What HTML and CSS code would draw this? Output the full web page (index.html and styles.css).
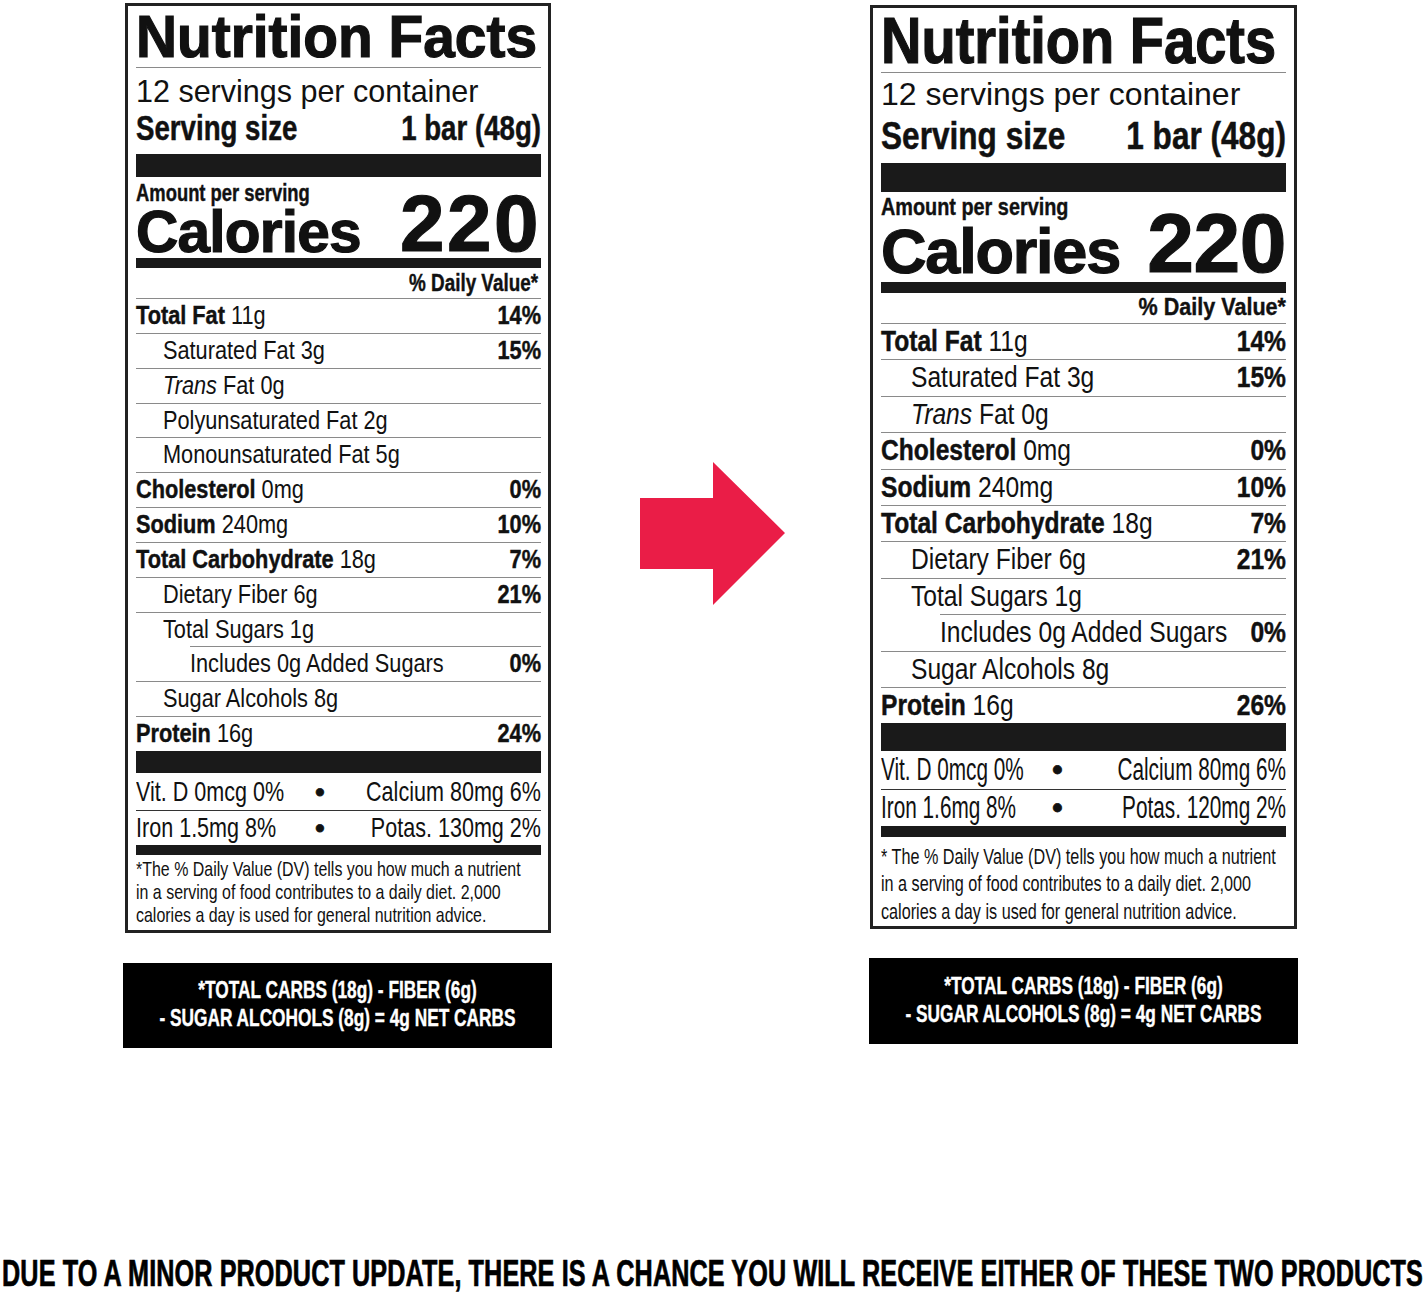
FILE: index.html
```html
<!DOCTYPE html>
<html lang="en">
<head>
<meta charset="utf-8">
<title>Nutrition Facts update</title>
<link rel="stylesheet" href="styles.css">
</head>
<body>
<div class="page">
  <div class="top">
    <div class="col col-a">
      <div class="nf nf-a">
        <div class="title"><div class="cx">Nutrition Facts</div></div>
        <div class="servings">12 servings per container</div>
        <div class="size"><div class="cx"><span>Serving size</span><span>1 bar (48g)</span></div></div>
        <div class="bar-xl"></div>
        <div class="cal">
          <div class="cal-left">
            <div class="amount"><div class="cx">Amount per serving</div></div>
            <div class="cal-word">Calories</div>
          </div>
          <div class="cal-num">220</div>
        </div>
        <div class="bar-m"></div>
        <div class="dv"><div class="cx">% Daily Value*</div></div>
        <div class="row"><div class="cx"><span><b>Total Fat</b> 11g</span><b>14%</b></div></div>
        <div class="row sub"><div class="cx"><span>Saturated Fat 3g</span><b>15%</b></div></div>
        <div class="row sub"><div class="cx"><span><i>Trans</i> Fat 0g</span></div></div>
        <div class="row sub"><div class="cx"><span>Polyunsaturated Fat 2g</span></div></div>
        <div class="row sub"><div class="cx"><span>Monounsaturated Fat 5g</span></div></div>
        <div class="row"><div class="cx"><span><b>Cholesterol</b> 0mg</span><b>0%</b></div></div>
        <div class="row"><div class="cx"><span><b>Sodium</b> 240mg</span><b>10%</b></div></div>
        <div class="row"><div class="cx"><span><b>Total Carbohydrate</b> 18g</span><b>7%</b></div></div>
        <div class="row sub"><div class="cx"><span>Dietary Fiber 6g</span><b>21%</b></div></div>
        <div class="row sub"><div class="cx"><span>Total Sugars 1g</span></div></div>
        <div class="row sub2"><div class="cx"><span>Includes 0g Added Sugars</span><b>0%</b></div></div>
        <div class="row sub"><div class="cx"><span>Sugar Alcohols 8g</span></div></div>
        <div class="row"><div class="cx"><span><b>Protein</b> 16g</span><b>24%</b></div></div>
        <div class="bar-xl2"></div>
        <div class="vit"><div class="cx"><span>Vit. D 0mcg 0%</span><span class="dot"><span>•</span></span><span class="vr">Calcium 80mg 6%</span></div></div>
        <div class="vit vit2"><div class="cx"><span>Iron 1.5mg 8%</span><span class="dot"><span>•</span></span><span class="vr">Potas. 130mg 2%</span></div></div>
        <div class="bar-m2"></div>
        <div class="foot"><div class="cx">*The % Daily Value (DV) tells you how much a nutrient<br>in a serving of food contributes to a daily diet. 2,000<br>calories a day is used for general nutrition advice.</div></div>
      </div>
      <div class="net net-a"><div class="cx">*TOTAL CARBS (18g) - FIBER (6g)<br>- SUGAR ALCOHOLS (8g) = 4g NET CARBS</div></div>
    </div>

    <div class="arrow">
      <svg width="145" height="143" viewBox="0 0 145 143" aria-hidden="true">
        <polygon points="0,36 73,36 73,0 145,71 73,143 73,107 0,107" fill="#ea1d47"/>
      </svg>
    </div>

    <div class="col col-b">
      <div class="nf nf-b">
        <div class="title"><div class="cx">Nutrition Facts</div></div>
        <div class="servings">12 servings per container</div>
        <div class="size"><div class="cx"><span>Serving size</span><span>1 bar (48g)</span></div></div>
        <div class="bar-xl"></div>
        <div class="cal">
          <div class="cal-left">
            <div class="amount"><div class="cx">Amount per serving</div></div>
            <div class="cal-word">Calories</div>
          </div>
          <div class="cal-num">220</div>
        </div>
        <div class="bar-m"></div>
        <div class="dv"><div class="cx">% Daily Value*</div></div>
        <div class="row"><div class="cx"><span><b>Total Fat</b> 11g</span><b>14%</b></div></div>
        <div class="row sub"><div class="cx"><span>Saturated Fat 3g</span><b>15%</b></div></div>
        <div class="row sub"><div class="cx"><span><i>Trans</i> Fat 0g</span></div></div>
        <div class="row"><div class="cx"><span><b>Cholesterol</b> 0mg</span><b>0%</b></div></div>
        <div class="row"><div class="cx"><span><b>Sodium</b> 240mg</span><b>10%</b></div></div>
        <div class="row"><div class="cx"><span><b>Total Carbohydrate</b> 18g</span><b>7%</b></div></div>
        <div class="row sub"><div class="cx"><span>Dietary Fiber 6g</span><b>21%</b></div></div>
        <div class="row sub"><div class="cx"><span>Total Sugars 1g</span></div></div>
        <div class="row sub2"><div class="cx"><span>Includes 0g Added Sugars</span><b>0%</b></div></div>
        <div class="row sub"><div class="cx"><span>Sugar Alcohols 8g</span></div></div>
        <div class="row"><div class="cx"><span><b>Protein</b> 16g</span><b>26%</b></div></div>
        <div class="bar-xl2"></div>
        <div class="vit"><div class="cx"><span>Vit. D 0mcg 0%</span><span class="dot"><span>•</span></span><span class="vr">Calcium 80mg 6%</span></div></div>
        <div class="vit vit2"><div class="cx"><span>Iron 1.6mg 8%</span><span class="dot"><span>•</span></span><span class="vr">Potas. 120mg 2%</span></div></div>
        <div class="bar-m2"></div>
        <div class="foot"><div class="cx">* The % Daily Value (DV) tells you how much a nutrient<br>in a serving of food contributes to a daily diet. 2,000<br>calories a day is used for general nutrition advice.</div></div>
      </div>
      <div class="net net-b"><div class="cx">*TOTAL CARBS (18g) - FIBER (6g)<br>- SUGAR ALCOHOLS (8g) = 4g NET CARBS</div></div>
    </div>
  </div>

  <div class="notice"><div class="cy">DUE TO A MINOR PRODUCT UPDATE, THERE IS A CHANCE YOU WILL RECEIVE EITHER OF THESE TWO PRODUCTS</div></div>
</div>
</body>
</html>
```

FILE: styles.css
```css
html, body {
  margin: 0;
  padding: 0;
  background: #fff;
}

.page {
  width: 1425px;
  height: 1292px;
  overflow: hidden;
  color: #111;
  font-family: "Liberation Sans", Arial, sans-serif;
}

.top {
  display: flex;
  align-items: flex-start;
  padding-left: 123px;
  height: 1050px;
}

.col {
  width: 429px;
  display: flex;
  flex-direction: column;
}

.col-b {
  margin-left: 84px;
}

.arrow {
  margin-top: 462px;
  margin-left: 88px;
  width: 145px;
  height: 143px;
}

.arrow svg {
  display: block;
}

/* condensed text: the type is drawn narrower, like a condensed face */
.cx {
  width: calc(100% / var(--k, 0.82));
  transform: scaleX(var(--k, 0.82));
  transform-origin: 0 0;
}

/* tall text: smaller type stretched upward, same condensed look */
.cy {
  transform: scaleY(var(--s, 1.46));
  transform-origin: 0 0;
}

/* ---------- label ---------- */
.nf {
  border: 3px solid #222;
  box-sizing: border-box;
  background: #fff;
  color: #111;
  white-space: nowrap;
}

.nf b {
  font-weight: 700;
  -webkit-text-stroke: 0.45px #111;
}

.nf i {
  font-style: italic;
}

.title {
  font-weight: 700;
  -webkit-text-stroke: 1.2px #111;
  border-bottom: 1.5px solid #8a8a8a;
}

.servings {
  font-weight: 400;
}

.size .cx {
  display: flex;
  justify-content: space-between;
  font-weight: 700;
  -webkit-text-stroke: 0.5px #111;
}

.bar-xl,
.bar-xl2,
.bar-m,
.bar-m2 {
  background: #1a1a1a;
}

.cal {
  display: flex;
  justify-content: space-between;
  align-items: flex-end;
}

.amount {
  font-weight: 700;
  -webkit-text-stroke: 0.4px #111;
}

.cal-word,
.cal-num {
  font-weight: 700;
  -webkit-text-stroke: 1.2px #111;
}

.dv {
  text-align: right;
  font-weight: 700;
  -webkit-text-stroke: 0.4px #111;
}

.row {
  box-sizing: border-box;
  border-top: 1.5px solid #8a8a8a;
}

.row .cx {
  display: flex;
  justify-content: space-between;
}

.vit .cx {
  display: grid;
}

.vit2 {
  border-top: 1px solid #333;
}

.dot {
  text-align: center;
}

.dot span {
  display: inline-block;
  transform: scaleX(calc(1 / var(--k)));
  -webkit-text-stroke: 0.8px #111;
}

.vr {
  text-align: right;
}

.foot {
  font-weight: 400;
}

.net {
  background: #000;
  color: #fff;
  font-weight: 700;
  -webkit-text-stroke: 0.4px #fff;
  text-align: center;
  box-sizing: border-box;
  white-space: nowrap;
  --k: 0.72;
}

/* ---------- version A (left) ---------- */
.nf-a {
  width: 426px;
  margin: 3px 0 0 2px;
  padding: 1px 7px 4.3px 8px;
}

.nf-a .title {
  --k: 0.97;
  font-size: 58.6px;
  line-height: 60px;
}

.nf-a .servings {
  font-size: 30.5px;
  line-height: 47px;
}

.nf-a .size {
  --k: 0.79;
  font-size: 35px;
  line-height: 26px;
}

.nf-a .bar-xl {
  margin-top: 13px;
  height: 23px;
}

.nf-a .amount {
  --k: 0.8;
  font-size: 23px;
  line-height: 32px;
}

.nf-a .cal-word {
  font-size: 58.6px;
  line-height: 45.4px;
  letter-spacing: -0.8px;
}

.nf-a .cal-num {
  font-size: 80px;
  line-height: 60.2px;
  letter-spacing: 2.5px;
}

.nf-a .bar-m {
  margin-top: 3.6px;
  height: 10px;
}

.nf-a .dv {
  --k: 0.82;
  font-size: 23px;
  line-height: 30px;
  padding-right: 3px;
}

.nf-a .row {
  --k: 0.82;
  height: 34.85px;
  line-height: 33.35px;
  font-size: 26.5px;
}

.nf-a .sub {
  padding-left: 27px;
}

.nf-a .sub2 {
  margin-left: 54px;
}

.nf-a .bar-xl2 {
  height: 22px;
}

.nf-a .vit {
  --k: 0.77;
  font-size: 28px;
  line-height: 37px;
}

.nf-a .vit .cx {
  grid-template-columns: 231px 16px 1fr;
}

.nf-a .vit2 {
  line-height: 34px;
}

.nf-a .bar-m2 {
  height: 10px;
}

.nf-a .foot {
  --k: 0.76;
  font-size: 21px;
  line-height: 23px;
  padding-top: 2.2px;
}

.net-a {
  margin-top: 30px;
  height: 85px;
  padding-top: 12.7px;
  font-size: 24px;
  line-height: 28px;
}

/* ---------- version B (right) ---------- */
.nf-b {
  width: 427px;
  margin: 5px 0 0 1px;
  padding: 2.5px 8px 1px 8px;
}

.nf-b .title {
  --k: 0.875;
  font-size: 64px;
  line-height: 61px;
}

.nf-b .servings {
  font-size: 32px;
  line-height: 42.8px;
}

.nf-b .size {
  --k: 0.81;
  font-size: 39px;
  line-height: 42.4px;
}

.nf-b .bar-xl {
  margin-top: 5.3px;
  height: 29px;
}

.nf-b .amount {
  --k: 0.81;
  font-size: 24.5px;
  line-height: 29px;
}

.nf-b .cal-word {
  font-size: 63px;
  line-height: 60.4px;
  letter-spacing: -1.2px;
}

.nf-b .cal-num {
  font-size: 84px;
  line-height: 75px;
  letter-spacing: -0.5px;
}

.nf-b .bar-m {
  margin-top: 0.6px;
  height: 11px;
}

.nf-b .dv {
  --k: 0.88;
  font-size: 24.5px;
  line-height: 27px;
  margin-bottom: 3px;
}

.nf-b .row {
  --k: 0.82;
  height: 36.4px;
  line-height: 34.9px;
  font-size: 30px;
}

.nf-b .sub {
  padding-left: 30px;
}

.nf-b .sub2 {
  margin-left: 59px;
}

.nf-b .bar-xl2 {
  height: 28px;
}

.nf-b .vit {
  --k: 0.67;
  font-size: 31px;
  line-height: 38px;
}

.nf-b .vit .cx {
  grid-template-columns: 255px 16px 1fr;
}

.nf-b .vit2 {
  line-height: 36px;
}

.nf-b .bar-m2 {
  height: 11px;
}

.nf-b .foot {
  --k: 0.72;
  font-size: 22.5px;
  line-height: 27.5px;
  padding-top: 5.4px;
}

.net-b {
  margin-top: 29px;
  height: 86px;
  padding-top: 13.7px;
  font-size: 24px;
  line-height: 28px;
}

/* ---------- bottom notice ---------- */
.notice {
  --s: 1.462;
  margin-top: 207.2px;
  font-weight: 700;
  -webkit-text-stroke: 0.5px #000;
  font-size: 25.2px;
  line-height: 23.25px;
  letter-spacing: 0.11px;
  text-align: center;
  white-space: nowrap;
  color: #000;
}
```
